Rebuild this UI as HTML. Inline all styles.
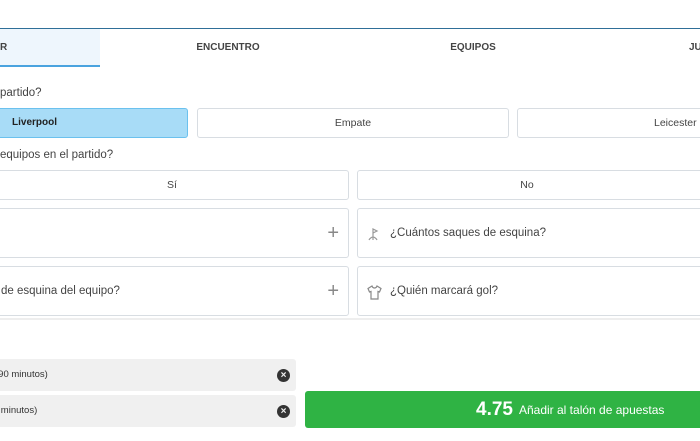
<!DOCTYPE html>
<html><head><meta charset="utf-8"><style>
*{margin:0;padding:0;box-sizing:border-box}
body{width:700px;height:441px;overflow:hidden;background:#fff;font-family:"Liberation Sans",sans-serif;color:#333;position:relative}
.a{position:absolute}
.line{left:0;top:28px;width:700px;height:1px;background:#2f6f98}
.tab{top:29px;height:38px;font-size:10px;font-weight:bold;color:#444;line-height:38px;text-align:center}
.q{font-size:11.5px;color:#444}
.btn{border:1px solid #d8dde2;border-radius:3px;background:#fff;font-size:10.5px;color:#444;text-align:center;line-height:28px;height:30px}
.card{border:1px solid #d8dde2;border-radius:3px;background:#fff;height:50px;font-size:11.5px;color:#444;line-height:48px}
.plus{position:absolute;right:9px;top:0;font-size:20px;color:#888;font-weight:300}
.it{background:#f0f0f0;border-radius:3px;height:32px;font-size:9.5px;line-height:32px;color:#333}
.x{position:absolute;right:6px;top:10px;width:13px;height:13px;border-radius:50%;background:#333;color:#f0f0f0;font-size:10px;line-height:13px;text-align:center;font-weight:bold}
</style></head><body>
<div class="a line"></div>
<div class="a tab" style="left:0;width:100px;background:#eef6fd;border-bottom:2px solid #4aa3df;text-align:left;">R</div>
<div class="a tab" style="left:178px;width:100px">ENCUENTRO</div>
<div class="a tab" style="left:423px;width:100px">EQUIPOS</div>
<div class="a tab" style="left:689px;width:40px;text-align:left">JU</div>
<div class="a q" style="left:0;top:87px">partido?</div>
<div class="a btn" style="left:-5px;top:108px;width:193px;background:#a8dcf7;border-color:#6bc1ee;text-align:left;padding-left:16px;font-weight:bold;font-size:10px;color:#222">Liverpool</div>
<div class="a btn" style="left:197px;top:108px;width:312px">Empate</div>
<div class="a btn" style="left:517px;top:108px;width:200px;text-align:left;padding-left:136px">Leicester</div>
<div class="a q" style="left:0;top:149px">equipos en el partido?</div>
<div class="a btn" style="left:-5px;top:170px;width:354px">Sí</div>
<div class="a btn" style="left:357px;top:170px;width:360px;padding-right:20px">No</div>
<div class="a card" style="left:-5px;top:208px;width:354px"><span class="plus">+</span></div>
<div class="a card" style="left:357px;top:208px;width:360px;padding-left:32px">¿Cuántos saques de esquina?
<svg class="a" style="left:8px;top:17px" width="16" height="16" viewBox="0 0 16 16" fill="none" stroke="#999" stroke-width="1.2"><path d="M7 14V3l4 2-4 2M3 14c1-2 3-3 4-3s3 1 4 3"/></svg></div>
<div class="a card" style="left:-5px;top:266px;width:354px;padding-left:5px">de esquina del equipo?<span class="plus">+</span></div>
<div class="a card" style="left:357px;top:266px;width:360px;padding-left:32px">¿Quién marcará gol?
<svg class="a" style="left:8px;top:17px" width="17" height="16" viewBox="0 0 17 16" fill="none" stroke="#888" stroke-width="1.2"><path d="M6 2 2 4.5 3.5 8 5 7.5V15h7V7.5l1.5.5L15 4.5 11 2c-.5 1.3-1.5 2-2.5 2S6.5 3.3 6 2z"/></svg></div>
<div class="a" style="left:0;top:318px;width:700px;height:2px;background:#eee"></div>
<div class="a it" style="left:-5px;top:359px;width:301px">(90 minutos)<span class="x">×</span></div>
<div class="a it" style="left:-5px;top:395px;width:301px">) minutos)<span class="x">×</span></div>
<div class="a" style="left:305px;top:391px;width:400px;height:37px;background:#2fb344;border-radius:3px;color:#fff;line-height:37px;padding-left:171px;font-size:12px"><b style="font-size:19px;vertical-align:-1px">4.75</b>&nbsp; Añadir al talón de apuestas</div>
</body></html>
